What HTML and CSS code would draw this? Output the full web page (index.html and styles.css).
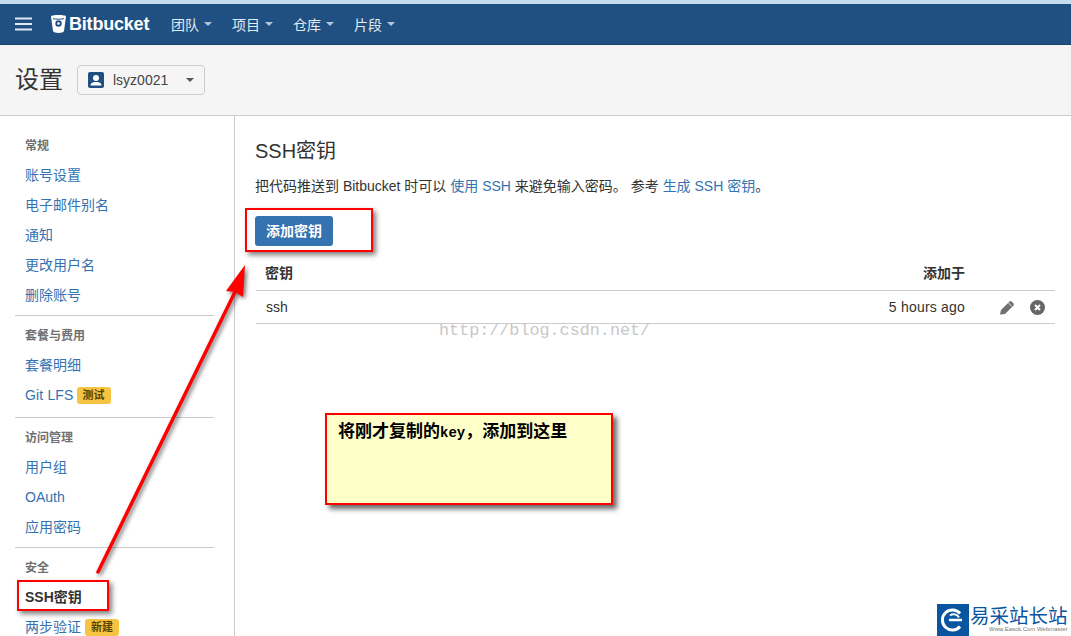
FILE: index.html
```html
<!DOCTYPE html>
<html lang="zh">
<head>
<meta charset="utf-8">
<title>SSH密钥</title>
<link rel="stylesheet" href="styles.css">
</head>
<body>
<div class="page">
  <header class="topbar">
    <svg class="burger" width="18" height="14" viewBox="0 0 18 14"><path d="M0 1.500h17M0 7h17M0 12.500h17" stroke="#dfe7f0" stroke-width="2"/></svg>
    <div class="brand">
      <svg width="15" height="18" viewBox="0 0 15 18"><path d="M0 1.500C0 .5 3.500 0 7.500 0S15 .5 15 1.500L13 16c-.2 1.300-3 2-5.500 2S2.200 17.300 2 16Z" fill="#fff"/><circle cx="7.500" cy="8.500" r="3.200" fill="#205081"/><circle cx="7.500" cy="8.500" r="1.300" fill="#fff"/><path d="M2 3.600c3 .8 8 .8 11 0" stroke="#205081" stroke-width="1" fill="none"/></svg>
      <span class="brand-name">Bitbucket</span>
    </div>
    <nav class="mainnav">
      <a class="mainnav-item">团队<i class="caret"></i></a>
      <a class="mainnav-item">项目<i class="caret"></i></a>
      <a class="mainnav-item">仓库<i class="caret"></i></a>
      <a class="mainnav-item">片段<i class="caret"></i></a>
    </nav>
  </header>
  <div class="subhead">
    <h1 class="page-title">设置</h1>
    <button class="account">
      <svg width="16" height="16" viewBox="0 0 16 16"><rect width="16" height="16" rx="2" fill="#205081"/><circle cx="8" cy="6" r="3" fill="#fff"/><path d="M2.500 13.500c0-2.500 2.500-3.500 5.500-3.500s5.500 1 5.500 3.500Z" fill="#fff"/></svg>
      <span class="account-name">lsyz0021</span>
      <i class="caret caret-dark"></i>
    </button>
  </div>
  <main class="body">
    <aside class="side">
      <div class="side-head">常规</div>
      <a class="side-link">账号设置</a>
      <a class="side-link">电子邮件别名</a>
      <a class="side-link">通知</a>
      <a class="side-link">更改用户名</a>
      <a class="side-link">删除账号</a>
      <hr class="side-rule">
      <div class="side-head">套餐与费用</div>
      <a class="side-link">套餐明细</a>
      <a class="side-link side-link-tall">Git LFS<span class="tag">测试</span></a>
      <hr class="side-rule">
      <div class="side-head">访问管理</div>
      <a class="side-link">用户组</a>
      <a class="side-link">OAuth</a>
      <a class="side-link">应用密码</a>
      <hr class="side-rule">
      <div class="side-head">安全</div>
      <a class="side-link side-current">SSH密钥</a>
      <a class="side-link side-link-last">两步验证<span class="tag">新建</span></a>
    </aside>
    <section class="content">
      <h2 class="content-title">SSH密钥</h2>
      <p class="intro">把代码推送到 Bitbucket 时可以 <a class="inline-link">使用 SSH</a> 来避免输入密码。 参考 <a class="inline-link">生成 SSH 密钥</a>。</p>
      <button class="primary">添加密钥</button>
      <div class="table">
        <div class="row row-head"><span class="cell-name">密钥</span><span class="cell-date">添加于</span><span class="cell-actions"></span></div>
        <div class="row">
          <span class="cell-name cell-plain">ssh</span>
          <span class="cell-date cell-plain">5 hours ago</span>
          <span class="cell-actions">
            <svg width="15" height="15" viewBox="0 0 15 15"><path d="M0 14.500l1-4.500 8.300-8.300a1.800 1.800 0 0 1 2.500 0l1.500 1.500a1.800 1.800 0 0 1 0 2.500L5 14Z" fill="#707070"/><path d="M8.500 3l3.500 3.500" stroke="#fff" stroke-width=".8"/></svg>
            <svg width="15" height="15" viewBox="0 0 15 15"><circle cx="7.500" cy="7.500" r="7.500" fill="#666"/><path d="M5 5l5 5M10 5l-5 5" stroke="#fff" stroke-width="2"/></svg>
          </span>
        </div>
      </div>
    </section>
  </main>

  <svg class="arrow" width="160" height="320" viewBox="0 0 160 320">
    <path d="M5 309 L142 29" stroke="#f00" stroke-width="3.500" stroke-linecap="round"/>
    <path d="M152 2 L150 34 L142 29 L133 28 Z" fill="#f00"/>
  </svg>
  <div class="mark mark-side"></div>
  <div class="mark mark-button"></div>
  <div class="note">将刚才复制的<span class="note-latin">key</span>，添加到这里</div>
  <div class="blogmark">http://blog.csdn.net/</div>
  <div class="sitemark">
    <svg width="32" height="32" viewBox="0 0 32 32"><rect width="32" height="32" fill="#0a55a0"/><path d="M23 9.500A10 10 0 1 0 23 22.500" fill="none" stroke="#fff" stroke-width="3"/><path d="M12 16h13" stroke="#fff" stroke-width="2.500"/><path d="M13 11.500a6 6 0 0 1 9 2" fill="none" stroke="#fff" stroke-width="2"/></svg>
    <div class="sitemark-text">
      <span class="sitemark-name">易采站长站</span>
      <span class="sitemark-sub">Www.Easck.Com Webmaster</span>
    </div>
  </div>
</div>
</body>
</html>
```
FILE: styles.css
```css
* { box-sizing: border-box; }
html, body { margin: 0; padding: 0; }
body { font-family: "Liberation Sans", "Noto Sans CJK SC", sans-serif; font-size: 14px; color: #333; background: #fff; }
.page { position: relative; width: 1071px; height: 636px; overflow: hidden; border-top: 4px solid #c6dcf0; display: flex; flex-direction: column; }

.topbar { height: 41px; flex: none; background: #205081; border-bottom: 1px solid #1a4168; display: flex; align-items: center; padding-left: 15px; color: #fff; }
.burger { flex: none; }
.brand { display: flex; align-items: center; gap: 3px; margin-left: 18px; width: 99px; }
.brand-name { font-family: "Liberation Sans", sans-serif; font-weight: 700; font-size: 18px; letter-spacing: -.2px; line-height: 20px; }
.mainnav { display: flex; gap: 20px; margin-left: 21px; }
.mainnav-item { font-size: 14px; color: #e4ebf3; display: flex; align-items: center; }
.caret { display: inline-block; width: 0; height: 0; margin-left: 5px; border-left: 4px solid transparent; border-right: 4px solid transparent; border-top: 4px solid #b4c6da; }
.caret-dark { border-top-color: #555; margin-left: auto; }

.subhead { height: 71px; flex: none; background: #f5f5f5; border-bottom: 1px solid #ccc; display: flex; align-items: center; padding: 0 0 1px 15px; }
.page-title { margin: 0; font-size: 24px; font-weight: 400; color: #333; line-height: 30px; }
.account { margin-left: 14px; width: 128px; height: 30px; padding: 0 10px; background: #f5f5f5; border: 1px solid #ccc; border-radius: 4px; display: flex; align-items: center; font: inherit; }
.account-name { margin-left: 9px; font-size: 14px; color: #444; }

.body { flex: 1; display: flex; min-height: 0; }
.side { width: 235px; flex: none; border-right: 1px solid #ccc; padding: 14px 20px 0 15px; }
.side-head { height: 30px; line-height: 32px; padding-left: 10px; font-size: 12px; font-weight: 700; color: #707070; }
.side-link { height: 30px; line-height: 30px; padding-left: 10px; display: flex; align-items: flex-start; color: #3572b0; font-size: 14px; white-space: nowrap; }
.side-link-tall { height: 32px; letter-spacing: .15px; }
.side-link-tall .tag { margin-left: 3px; }
.side-link-last { height: 24px; }
.side-current { color: #333; font-weight: 700; }
.side-rule { margin: 5px 0 4px; border: 0; border-top: 1px solid #ccc; height: 0; }
.tag { margin: 7px 0 0 4px; padding: 0 6px; height: 17px; line-height: 17px; background: #f6c342; color: #594300; border-radius: 3px; font-size: 11px; font-weight: 700; letter-spacing: 0; }

.content { flex: 1; padding: 20px 16px 0 20px; min-width: 0; }
.content-title { margin: 0; font-size: 20px; font-weight: 400; line-height: 30px; color: #333; }
.intro { margin: 10px 0 0; font-size: 14px; line-height: 20px; color: #333; }
.inline-link { color: #3572b0; }
.primary { margin-top: 20px; display: block; width: 78px; height: 30px; padding: 0 0 2px; background: #3572b0; border: 0; border-radius: 3px; color: #fff; font: inherit; font-size: 14px; font-weight: 700; }
.table { margin: 11px 0 0 1px; }
.row { display: flex; align-items: center; height: 33px; border-bottom: 1px solid #ccc; }
.row-head { height: 34px; padding-bottom: 3px; font-weight: 700; font-size: 14px; }
.row-head .cell-name { padding-left: 9px; }
.cell-name { flex: 1; padding-left: 10px; }
.cell-plain { font-weight: 400; font-size: 14px; color: #333; }
.cell-date.cell-plain { letter-spacing: .2px; }
.cell-actions { width: 90px; flex: none; display: flex; justify-content: flex-end; align-items: center; gap: 15px; padding-right: 10px; }

.arrow { position: absolute; left: 93px; top: 259px; filter: drop-shadow(2px 2px 2px rgba(0,0,0,.55)); }
.mark { position: absolute; border: 2px solid #f00; box-shadow: 3px 3px 5px rgba(0,0,0,.5); }
.mark-side { left: 17px; top: 576px; width: 92px; height: 31px; }
.mark-button { left: 245px; top: 204px; width: 128px; height: 44px; }
.note { position: absolute; left: 325px; top: 409px; width: 288px; height: 92px; padding: 5px 11px; background: #ffffc8; border: 2px solid #f00; box-shadow: 4px 4px 5px rgba(0,0,0,.6); font-family: "Noto Sans CJK SC", sans-serif; font-size: 17px; font-weight: 700; line-height: 20px; color: #000; white-space: nowrap; }
.note-latin { font-family: "Liberation Mono", monospace; font-size: 14px; }
.blogmark { position: absolute; left: 439px; top: 317px; font-family: "Liberation Mono", monospace; font-size: 16.750px; line-height: 20px; color: #c8c8c8; }
.sitemark { position: absolute; left: 937px; top: 600px; display: flex; gap: 1px; background: #fff; }
.sitemark-text { display: flex; flex-direction: column; }
.sitemark-name { font-size: 19.500px; line-height: 22px; color: #0a55a0; white-space: nowrap; font-family: "Noto Sans CJK SC", sans-serif; }
.sitemark-sub { font-size: 6px; line-height: 7px; color: #777; white-space: nowrap; padding-left: 19px; }
```
